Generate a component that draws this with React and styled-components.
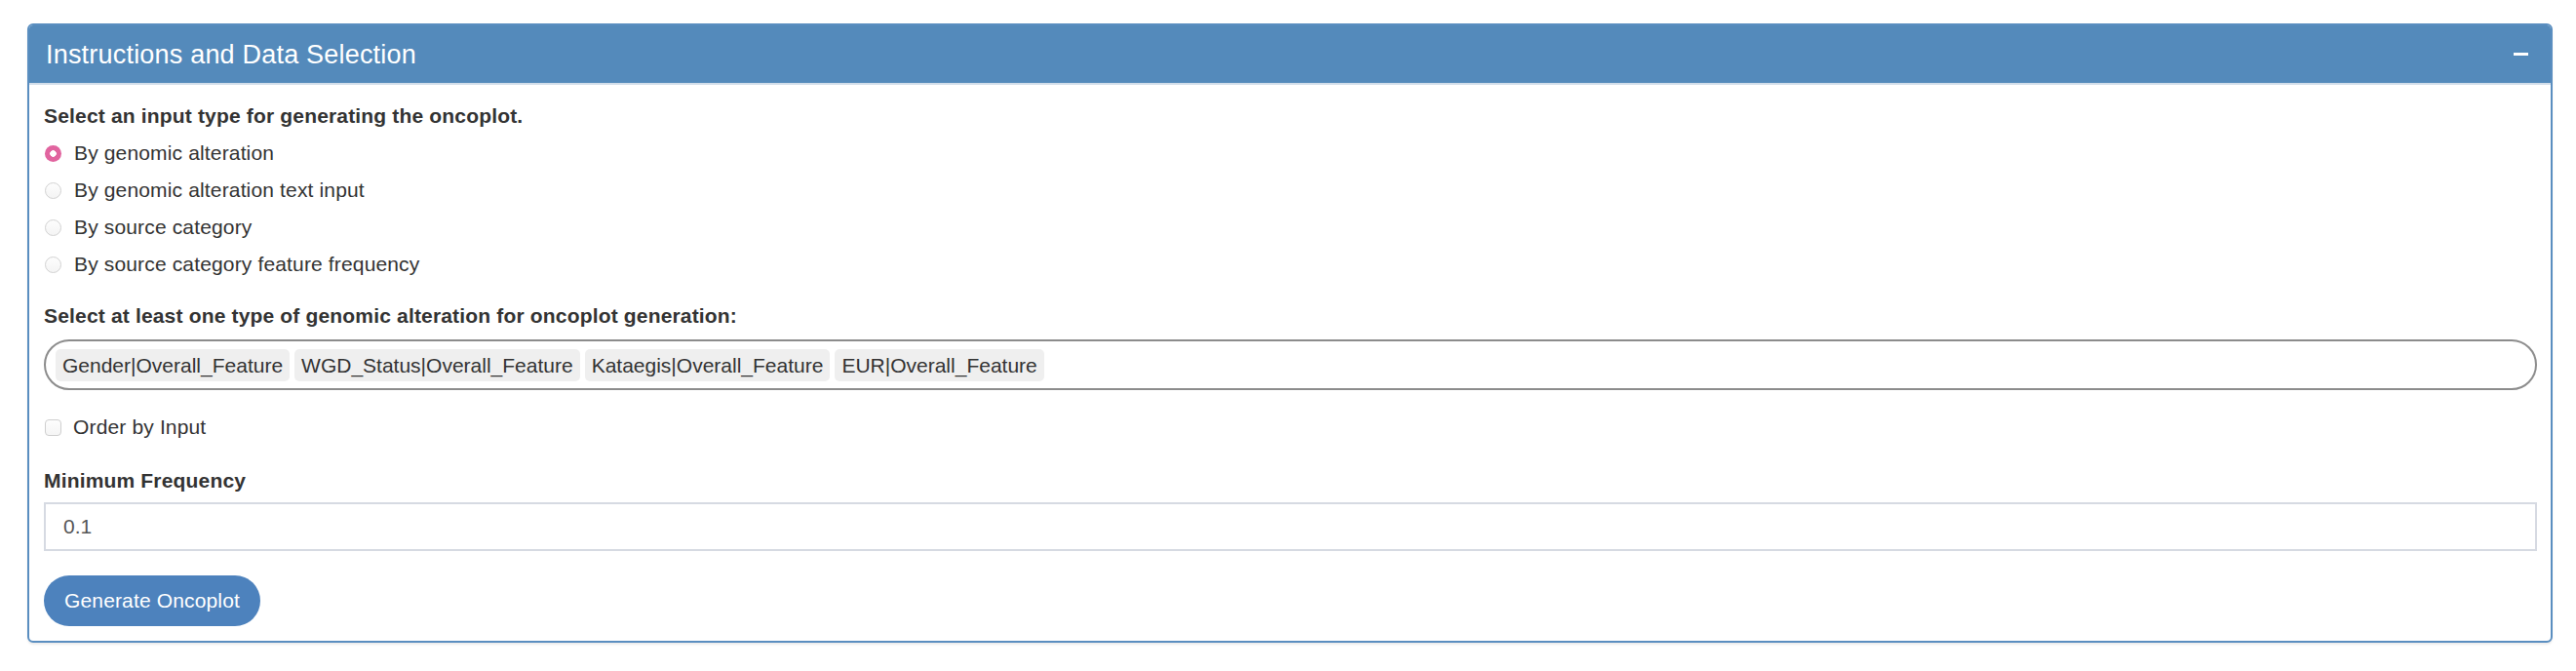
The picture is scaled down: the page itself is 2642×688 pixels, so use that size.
import React from "react";
import styled, { createGlobalStyle } from "styled-components";

const Global = createGlobalStyle`
  html, body { margin: 0; padding: 0; background: #fff; }
  body { font-family: "Liberation Sans", Arial, Helvetica, sans-serif; color: #333; font-size: 21px; line-height: 30px; }
  * { box-sizing: border-box; }
`;

const Page = styled.div`
  padding: 24px 24px 20px 28px;
`;

const Panel = styled.section`
  border: 2px solid #5a8ec0;
  border-radius: 6px;
  background: #fff;
  box-shadow: 0 2px 2px rgba(0, 0, 0, 0.08);
  overflow: hidden;
`;

const Header = styled.header`
  height: 62px;
  background: #548abb;
  border-bottom: 2px solid #d3deea;
  display: flex;
  align-items: center;
  justify-content: space-between;
  padding: 0 22px 0 17px;
  margin-top: -1px;
`;

const Title = styled.h3`
  margin: 0;
  font-size: 27px;
  font-weight: 400;
  line-height: 30px;
  letter-spacing: 0.2px;
  color: #fff;
  padding-top: 1px;
`;

const Collapse = styled.button`
  border: 0;
  background: transparent;
  padding: 0;
  width: 16px;
  height: 20px;
  display: flex;
  align-items: center;
  cursor: pointer;
  &::before {
    content: "";
    display: block;
    width: 15px;
    height: 3px;
    background: #fff;
  }
`;

const Body = styled.div`
  padding: 17px 14px 15px 15px;
  display: flex;
  flex-direction: column;
`;

const Label = styled.label`
  display: block;
  font-weight: 700;
  letter-spacing: 0.17px;
  margin-top: ${(p) => p.$mt || 0}px;
`;

const RadioList = styled.div`
  display: flex;
  flex-direction: column;
  gap: 8px;
  margin-top: 8px;
`;

const OptionRow = styled.label`
  display: flex;
  align-items: center;
  height: 30px;
  letter-spacing: 0.15px;
  margin-top: ${(p) => p.$mt || 0}px;
  cursor: pointer;
`;

const RadioDot = styled.span`
  width: 17px;
  height: 17px;
  border-radius: 50%;
  margin: 0 13px 0 1px;
  flex: none;
  ${(p) =>
    p.$on
      ? `background: radial-gradient(circle, #fff 0 3px, #e1649f 3.6px);`
      : `background: linear-gradient(#fdfdfd, #f4f4f4); border: 1px solid #d2d2d2;`}
`;

const CheckBoxMark = styled.span`
  width: 17px;
  height: 17px;
  border-radius: 4px;
  margin: 0 12px 0 1px;
  flex: none;
  background: linear-gradient(#fdfdfd, #f5f5f5);
  border: 1px solid #cfcfcf;
`;

const TagBox = styled.div`
  margin-top: 9px;
  height: 52px;
  border: 2px solid #8c8c8c;
  border-radius: 26px;
  display: flex;
  align-items: center;
  gap: 5px;
  padding: 0 10px;
`;

const Tag = styled.span`
  background: #efefef;
  border-radius: 5px;
  height: 33px;
  line-height: 33px;
  padding: 0 7px;
  color: #333;
  white-space: nowrap;
`;

const NumberInput = styled.input`
  margin-top: 7px;
  height: 50px;
  width: 100%;
  border: 2px solid #d6dae2;
  padding: 0 18px;
  font: inherit;
  color: #555;
  outline: none;
  background: #fff;
`;

const Button = styled.button`
  margin-top: 25px;
  align-self: flex-start;
  height: 52px;
  width: 222px;
  border: 0;
  border-radius: 26px;
  background: #4d82bd;
  color: #fff;
  font: inherit;
  letter-spacing: 0.15px;
  padding: 0 18px;
  cursor: pointer;
`;

const options = [
  "By genomic alteration",
  "By genomic alteration text input",
  "By source category",
  "By source category feature frequency",
];

const tags = [
  "Gender|Overall_Feature",
  "WGD_Status|Overall_Feature",
  "Kataegis|Overall_Feature",
  "EUR|Overall_Feature",
];

export default function App() {
  return (
    <>
      <Global />
      <Page>
        <Panel>
          <Header>
            <Title>Instructions and Data Selection</Title>
            <Collapse aria-label="collapse" />
          </Header>
          <Body>
            <Label>Select an input type for generating the oncoplot.</Label>
            <RadioList>
              {options.map((o, i) => (
                <OptionRow key={o}>
                  <RadioDot $on={i === 0} />
                  {o}
                </OptionRow>
              ))}
            </RadioList>
            <Label $mt={23}>Select at least one type of genomic alteration for oncoplot generation:</Label>
            <TagBox>
              {tags.map((t) => (
                <Tag key={t}>{t}</Tag>
              ))}
            </TagBox>
            <OptionRow $mt={23}>
              <CheckBoxMark />
              Order by Input
            </OptionRow>
            <Label $mt={25}>Minimum Frequency</Label>
            <NumberInput defaultValue="0.1" />
            <Button>Generate Oncoplot</Button>
          </Body>
        </Panel>
      </Page>
    </>
  );
}
